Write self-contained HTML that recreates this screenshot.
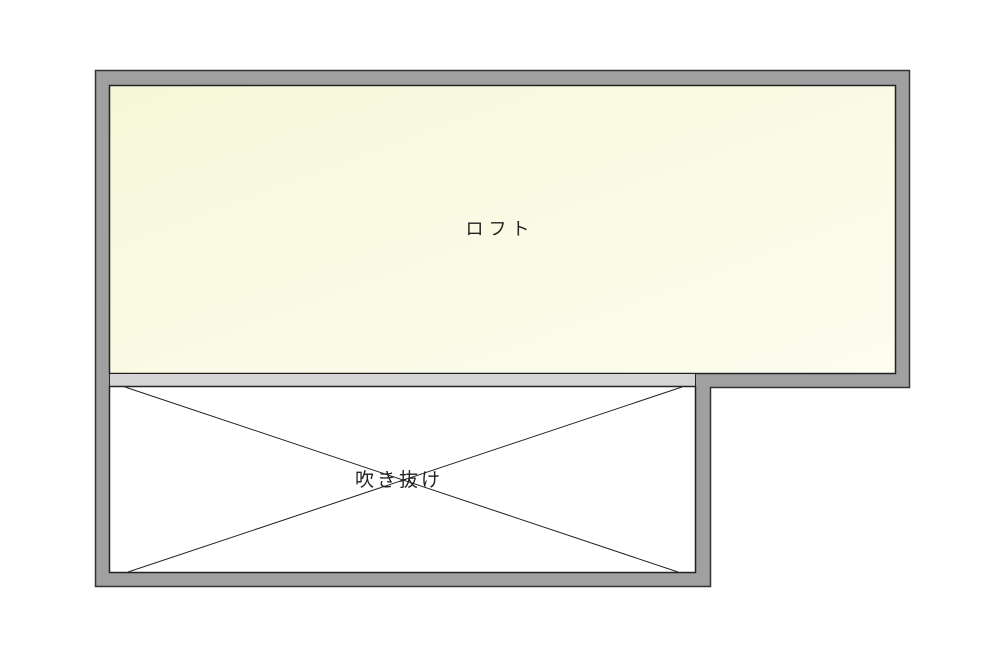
<!DOCTYPE html>
<html><head><meta charset="utf-8"><style>
html,body{margin:0;padding:0;background:#fff;width:1008px;height:670px;overflow:hidden}
svg{display:block}
text{font-family:"Liberation Sans","Noto Sans CJK JP",sans-serif;fill:#222}
</style></head><body>
<svg width="1008" height="670" viewBox="0 0 1008 670">
<defs><linearGradient id="g" x1="0" y1="0" x2="1" y2="1">
<stop offset="0" stop-color="#f7f7d9"/><stop offset="1" stop-color="#fdfdf0"/></linearGradient></defs>
<polygon points="95.5,70.5 909.5,70.5 909.5,387.5 710.5,387.5 710.5,586.5 95.5,586.5" fill="#a0a0a0" stroke="#333" stroke-width="1.5"/>
<rect x="109.5" y="85.5" width="786" height="288" fill="url(#g)" stroke="#222" stroke-width="1.5"/>
<rect x="109.5" y="373.5" width="586" height="13" fill="#d4d4d4" stroke="#222" stroke-width="1"/>
<rect x="109.5" y="386.5" width="586" height="186" fill="#fff" stroke="#222" stroke-width="1.5"/>
<line x1="125" y1="387" x2="678" y2="572" stroke="#222" stroke-width="1"/>
<line x1="682" y1="387" x2="128" y2="572" stroke="#222" stroke-width="1"/>
<text x="500" y="235" font-size="18" text-anchor="middle" letter-spacing="5">ロフト</text>
<text x="399" y="486" font-size="19" text-anchor="middle" letter-spacing="3">吹き抜け</text>
</svg>
</body></html>
